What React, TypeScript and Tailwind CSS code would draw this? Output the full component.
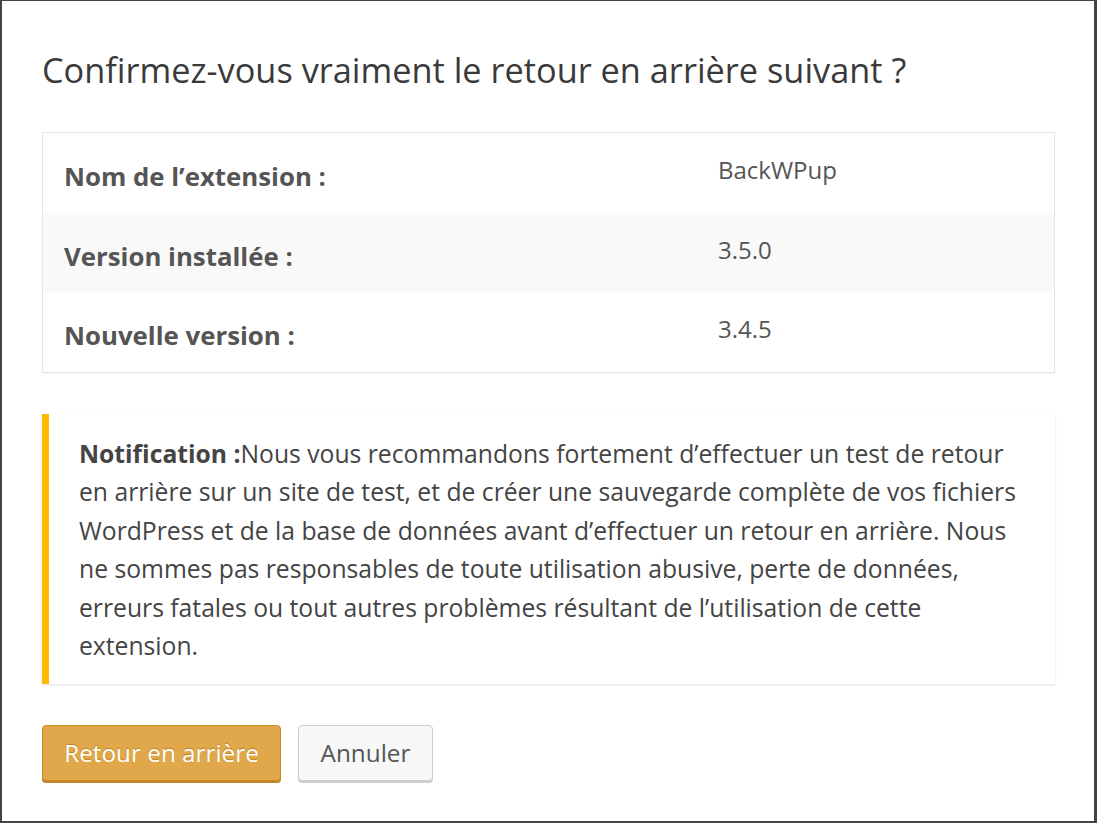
import React from "react";

const font = { fontFamily: '"Open Sans", "Noto Sans", Arial, sans-serif' };

export default function App() {
  return (
    <div
      className="h-screen w-full bg-white border-t border-l-2 border-r-[3px] border-b-2 border-[#444444] text-[#444444] overflow-hidden"
      style={font}
    >
      <div className="pl-[40px] pr-[39px] pt-[49px]">
        <h2 className="text-[34.3px] leading-[40px] text-[#3a3a3a] font-normal">
          Confirmez-vous vraiment le retour en arrière suivant ?
        </h2>

        <div className="mt-[42px] border border-[#e5e5e5] shadow-[0_1px_1px_rgba(0,0,0,0.04)]">
          {[
            ["Nom de l’extension :", "BackWPup", "bg-white"],
            ["Version installée :", "3.5.0", "bg-[#f9f9f9]"],
            ["Nouvelle version :", "3.4.5", "bg-white"],
          ].map(([label, value, bg], i) => (
            <div key={i} className={`flex h-[79.5px] ${bg}`}>
              <div className="w-[675px] shrink-0 pl-[21px] pt-[27px] text-[25.8px] leading-[32px] font-bold text-[#555555]">
                {label}
              </div>
              <div className="pt-[21px] text-[24px] leading-[32px] text-[#555555]">
                {value}
              </div>
            </div>
          ))}
        </div>

        <div className="mt-[41px] flex bg-white shadow-[0_1px_2px_rgba(0,0,0,0.12)]">
          <div className="w-[7px] shrink-0 bg-[#ffb900]" />
          <div className="pl-[30px] pr-[20px] pt-[21px] pb-[18px] text-[24.7px] leading-[38.6px] text-[#444444] whitespace-nowrap">
            <strong className="font-bold">Notification :</strong>Nous vous recommandons fortement d’effectuer un test de retour
            <br />
            en arrière sur un site de test, et de créer une sauvegarde complète de vos fichiers
            <br />
            WordPress et de la base de données avant d’effectuer un retour en arrière. Nous
            <br />
            ne sommes pas responsables de toute utilisation abusive, perte de données,
            <br />
            erreurs fatales ou tout autres problèmes résultant de l’utilisation de cette
            <br />
            extension.
          </div>
        </div>

        <div className="mt-[41px] flex gap-[17px]">
          <button className="h-[56px] w-[239px] rounded-[4px] border border-[#c48b2a] bg-[#e0a84a] text-white text-[24.3px] shadow-[0_2px_0_#c0862a] [text-shadow:0_-1px_1px_#b8822a]">
            Retour en arrière
          </button>
          <button className="h-[56px] w-[135px] rounded-[4px] border border-[#cccccc] bg-[#f7f7f7] text-[#555555] text-[24.3px] shadow-[0_2px_0_#cccccc]">
            Annuler
          </button>
        </div>
      </div>
    </div>
  );
}
